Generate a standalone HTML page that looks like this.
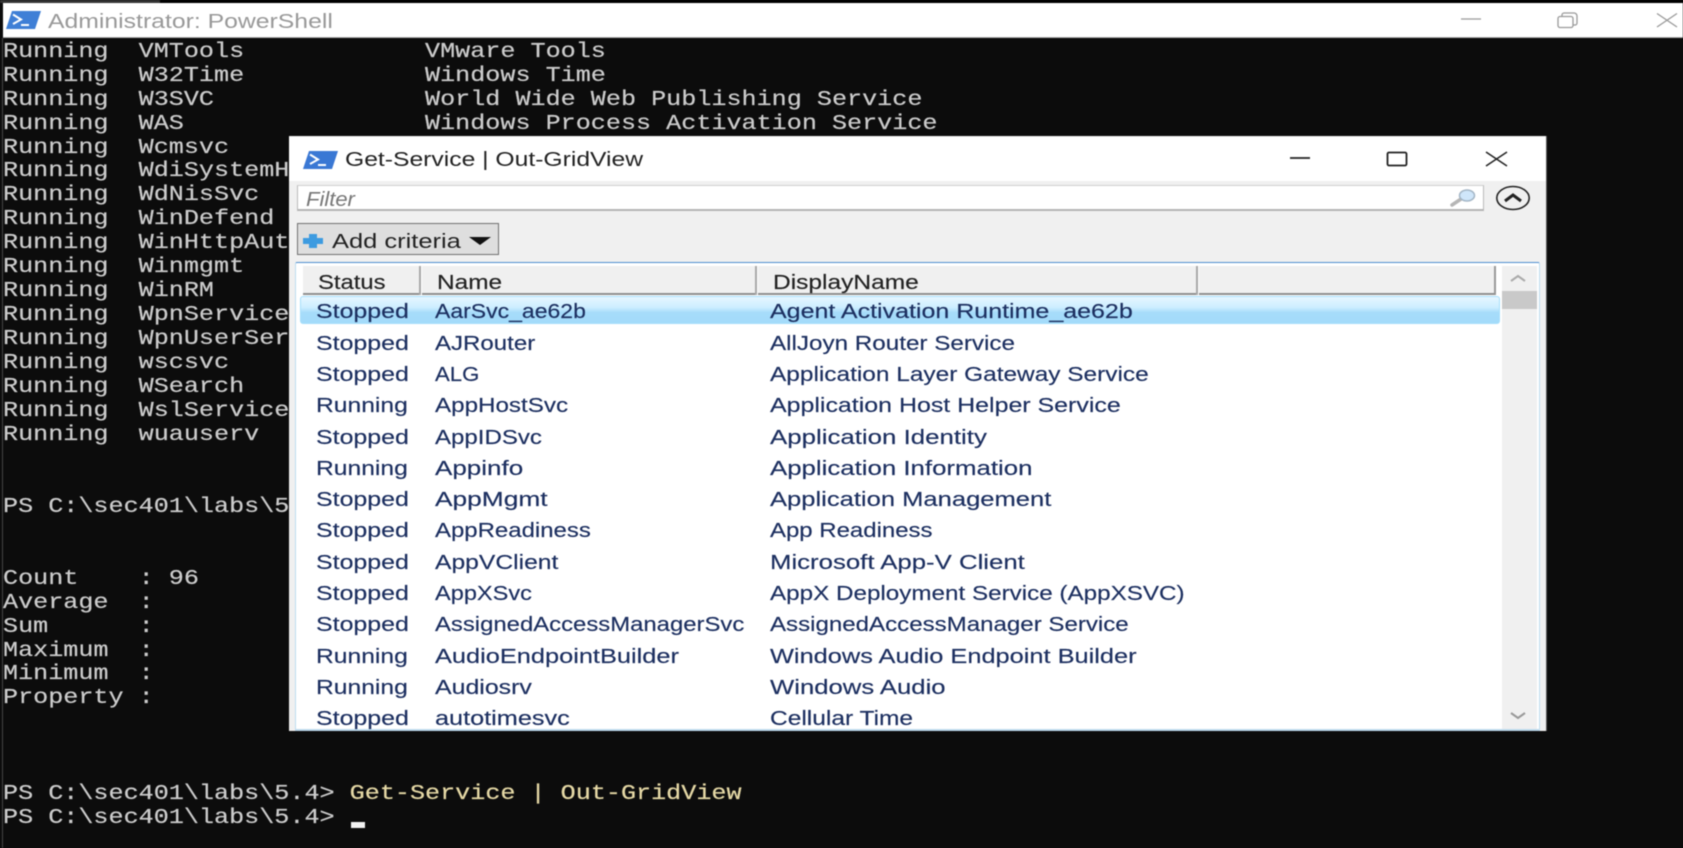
<!DOCTYPE html>
<html><head><meta charset="utf-8"><title>Administrator: PowerShell</title>
<style>
html,body{margin:0;padding:0;width:1683px;height:848px;overflow:hidden;background:#0c0c0c}
#all{position:absolute;left:0;top:0;width:1683px;height:848px;overflow:hidden;background:#0c0c0c;filter:blur(.45px)}
.a{position:absolute}
#top{left:0;top:0;width:1683px;height:3px;background:#000}
#top2{left:0;top:0;width:160px;height:3px;background:#333}
#tb{left:3px;top:3px;width:1680px;height:34px;background:#fff;border-bottom:1px solid #aaa}
#ln{left:2px;top:38px;width:1px;height:810px;background:#444}
.t{position:absolute;white-space:pre;font-family:"Liberation Sans",sans-serif;font-size:20px;transform-origin:0 50%;transform:scaleX(1.19)}
pre{position:absolute;margin:0;left:3px;top:40.7px;font-family:"Liberation Mono",monospace;font-size:21px;line-height:23.95px;color:#cccccc;transform-origin:0 0;transform:scaleX(1.196);-webkit-text-stroke:.2px #cccccc}
.y{color:#e6d9a6;-webkit-text-stroke:.2px #e6d9a6}
#win{left:289px;top:136px;width:1258px;height:595px;background:#f0f0f0;border-right:1px solid #555;box-sizing:border-box}
#wt{left:289px;top:137px;width:1257px;height:44px;background:#fff}
#flt{left:297px;top:185px;width:1187px;height:26px;box-sizing:border-box;background:#fff;border:1px solid #d0d0d0;border-right-color:#bbb;border-bottom:2px solid #b4b4b4;border-left-color:#bbb}
#btn{left:297px;top:223px;width:202px;height:32px;box-sizing:border-box;background:#dedede;border:1.5px solid #707070}
#grid{left:295px;top:262px;width:1245px;height:469px;box-sizing:border-box;background:#fff;border:1.5px solid #bcdcf0;border-top:1.5px solid #4f8fcf;border-bottom:2px solid #bcd9ec;border-radius:2px 2px 0 0}
#hd{left:303px;top:266px;width:1193px;height:29px;background:#f0f0f0;border-bottom:2px solid #8e8e8e;border-right:2px solid #999;box-sizing:border-box}
.sep{position:absolute;top:266px;width:2px;height:29px;background:#a8a8a8;border-right:1px solid #fff}
#sel{left:300px;top:296px;width:1200px;height:28px;box-sizing:border-box;border:1px solid #a6dffb;border-radius:3px;background:linear-gradient(#e6f6ff 0,#cdeeff 40%,#a6dcfa 60%,#a3dbfa 100%)}
#sb{left:1502px;top:266px;width:35px;height:463px;background:#f0f0f0}
#th{left:1502px;top:291px;width:35px;height:18px;background:#c9c9c9}
.r{position:absolute;left:0;width:1500px;height:31.3px;line-height:31.3px;color:#1c2f60}
.r .t{top:0;-webkit-text-stroke:.15px #1c2f60}
.s{left:316px}.n{left:435px}.d{left:770px}
.st{transform:scaleX(1.247)}.ru{transform:scaleX(1.232)}
.h{color:#222;top:268px;line-height:31px;height:31px;-webkit-text-stroke:.15px #222}
</style></head><body>
<div id="all">
<pre>Running  VMTools            VMware Tools
Running  W32Time            Windows Time
Running  W3SVC              World Wide Web Publishing Service
Running  WAS                Windows Process Activation Service
Running  Wcmsvc
Running  WdiSystemHost
Running  WdNisSvc
Running  WinDefend
Running  WinHttpAutoProxy
Running  Winmgmt
Running  WinRM
Running  WpnService
Running  WpnUserService
Running  wscsvc
Running  WSearch
Running  WslService
Running  wuauserv


PS C:\sec401\labs\5.4&gt;


Count    : 96
Average  :
Sum      :
Maximum  :
Minimum  :
Property :



PS C:\sec401\labs\5.4&gt; <span class="y">Get-Service | Out-GridView</span>
PS C:\sec401\labs\5.4&gt;</pre>
<div class="a" style="left:351px;top:822px;width:14px;height:6px;background:#f2f2f2"></div>
<div class="a" id="top"></div><div class="a" id="top2"></div><div class="a" id="tb"></div><div class="a" id="ln"></div>
<svg class="a" style="left:6px;top:11px" width="35" height="18" viewBox="0 0 35 18"><path d="M6 0H35L29 18H0Z" fill="#3f7fd6"/><path d="M7 3.5L15 8.5L7 13" fill="none" stroke="#fff" stroke-width="2"/><path d="M15 14H23" stroke="#fff" stroke-width="2"/></svg>
<div class="t" style="left:48px;top:10px;line-height:24px;color:#999;transform:scaleX(1.238)">Administrator: PowerShell</div>
<svg class="a" style="left:1455px;top:8px" width="228" height="24" viewBox="0 0 228 24" fill="none" stroke="#999" stroke-width="1.3"><path d="M6 11H26"/><path d="M103 10.5a2 2 0 0 1 2-2h11a2 2 0 0 1 2 2v7a2 2 0 0 1-2 2h-11a2 2 0 0 1-2-2z"/><path d="M107 8V7a2 2 0 0 1 2-2h10a3 3 0 0 1 3 3v7a2 2 0 0 1-2 2h-2"/><path d="M202 5.500L222 19M222 5.500L202 19"/></svg>

<div class="a" id="win"></div><div class="a" id="wt"></div>
<svg class="a" style="left:303px;top:151px" width="35" height="18" viewBox="0 0 35 18"><path d="M6 0H35L29 18H0Z" fill="#3a78d4"/><path d="M7 3.500L15 8.500L7 13" fill="none" stroke="#fff" stroke-width="2"/><path d="M15 14H23" stroke="#fff" stroke-width="2"/></svg>
<div class="t" style="left:345px;top:148px;line-height:24px;color:#222;transform:scaleX(1.234)">Get-Service | Out-GridView</div>
<svg class="a" style="left:1280px;top:145px" width="235" height="26" viewBox="0 0 235 26" fill="none" stroke="#222" stroke-width="1.8"><path d="M10 13H30"/><rect x="107.500" y="7.500" width="19" height="13" rx="1.500"/><path d="M206 7L227 21M227 7L206 21" stroke-width="1.500"/></svg>

<div class="a" id="flt"></div>
<div class="t" style="left:306px;top:187px;line-height:26px;font-style:italic;color:#777;transform:scaleX(1.1)">Filter</div>
<svg class="a" style="left:1449px;top:188px" width="28" height="20" viewBox="0 0 28 20"><path d="M3 17L12 11" stroke="#b5b5b5" stroke-width="3.500" stroke-linecap="round"/><ellipse cx="18" cy="7.500" rx="7.500" ry="5.500" fill="#cfe6fa" stroke="#a4b6c6" stroke-width="1.500"/></svg>
<svg class="a" style="left:1494px;top:184px" width="38" height="28" viewBox="0 0 38 28" fill="none" stroke="#222"><ellipse cx="19" cy="14" rx="16.200" ry="11.500" stroke-width="1.600"/><path d="M11 17L19 11L27 17" stroke-width="3"/></svg>

<div class="a" id="btn"></div>
<svg class="a" style="left:303px;top:234px" width="20" height="14" viewBox="0 0 20 14"><path d="M6 0H14V4H20V10H14V14H6V10H0V4H6Z" fill="#3d9be0"/></svg>
<div class="t" style="left:332px;top:228.500px;line-height:26px;color:#222;transform:scaleX(1.273)">Add criteria</div>
<svg class="a" style="left:469px;top:237px" width="22" height="8" viewBox="0 0 22 8"><path d="M0 0H22L11 8Z" fill="#111"/></svg>

<div class="a" id="grid"></div>
<div class="a" id="hd"></div>
<div class="sep" style="left:419px"></div><div class="sep" style="left:755px"></div><div class="sep" style="left:1196px"></div>
<div class="t h" style="left:318px">Status</div>
<div class="t h" style="left:437px;transform:scaleX(1.22)">Name</div>
<div class="t h" style="left:773px;transform:scaleX(1.226)">DisplayName</div>
<div class="a" id="sel"></div>
<div class="a" id="sb"></div><div class="a" id="th"></div>
<svg class="a" style="left:1509px;top:274px" width="18" height="8" viewBox="0 0 18 8"><path d="M2 7L9 2L16 7" fill="none" stroke="#aaa" stroke-width="2"/></svg>
<svg class="a" style="left:1509px;top:712px" width="18" height="8" viewBox="0 0 18 8"><path d="M2 1L9 6L16 1" fill="none" stroke="#999" stroke-width="2"/></svg>

<div class="r" style="top:297.3px"><span class="t s st">Stopped</span><span class="t n" style="transform:scaleX(1.15)">AarSvc_ae62b</span><span class="t d" style="transform:scaleX(1.25)">Agent Activation Runtime_ae62b</span></div>
<div class="r" style="top:328.6px"><span class="t s st">Stopped</span><span class="t n" style="transform:scaleX(1.202)">AJRouter</span><span class="t d" style="transform:scaleX(1.211)">AllJoyn Router Service</span></div>
<div class="r" style="top:359.9px"><span class="t s st">Stopped</span><span class="t n" style="transform:scaleX(1.107)">ALG</span><span class="t d" style="transform:scaleX(1.221)">Application Layer Gateway Service</span></div>
<div class="r" style="top:391.2px"><span class="t s ru">Running</span><span class="t n" style="transform:scaleX(1.209)">AppHostSvc</span><span class="t d" style="transform:scaleX(1.247)">Application Host Helper Service</span></div>
<div class="r" style="top:422.5px"><span class="t s st">Stopped</span><span class="t n" style="transform:scaleX(1.202)">AppIDSvc</span><span class="t d" style="transform:scaleX(1.292)">Application Identity</span></div>
<div class="r" style="top:453.8px"><span class="t s ru">Running</span><span class="t n" style="transform:scaleX(1.3)">Appinfo</span><span class="t d" style="transform:scaleX(1.29)">Application Information</span></div>
<div class="r" style="top:485.1px"><span class="t s st">Stopped</span><span class="t n" style="transform:scaleX(1.315)">AppMgmt</span><span class="t d" style="transform:scaleX(1.278)">Application Management</span></div>
<div class="r" style="top:516.4px"><span class="t s st">Stopped</span><span class="t n" style="transform:scaleX(1.198)">AppReadiness</span><span class="t d" style="transform:scaleX(1.198)">App Readiness</span></div>
<div class="r" style="top:547.7px"><span class="t s st">Stopped</span><span class="t n" style="transform:scaleX(1.233)">AppVClient</span><span class="t d" style="transform:scaleX(1.288)">Microsoft App-V Client</span></div>
<div class="r" style="top:579px"><span class="t s st">Stopped</span><span class="t n" style="transform:scaleX(1.178)">AppXSvc</span><span class="t d" style="transform:scaleX(1.211)">AppX Deployment Service (AppXSVC)</span></div>
<div class="r" style="top:610.3px"><span class="t s st">Stopped</span><span class="t n" style="transform:scaleX(1.194)">AssignedAccessManagerSvc</span><span class="t d" style="transform:scaleX(1.204)">AssignedAccessManager Service</span></div>
<div class="r" style="top:641.6px"><span class="t s ru">Running</span><span class="t n" style="transform:scaleX(1.268)">AudioEndpointBuilder</span><span class="t d" style="transform:scaleX(1.268)">Windows Audio Endpoint Builder</span></div>
<div class="r" style="top:672.9px"><span class="t s ru">Running</span><span class="t n" style="transform:scaleX(1.245)">Audiosrv</span><span class="t d" style="transform:scaleX(1.284)">Windows Audio</span></div>
<div class="r" style="top:704.2px"><span class="t s st">Stopped</span><span class="t n" style="transform:scaleX(1.263)">autotimesvc</span><span class="t d" style="transform:scaleX(1.226)">Cellular Time</span></div>
</div>
</body></html>
